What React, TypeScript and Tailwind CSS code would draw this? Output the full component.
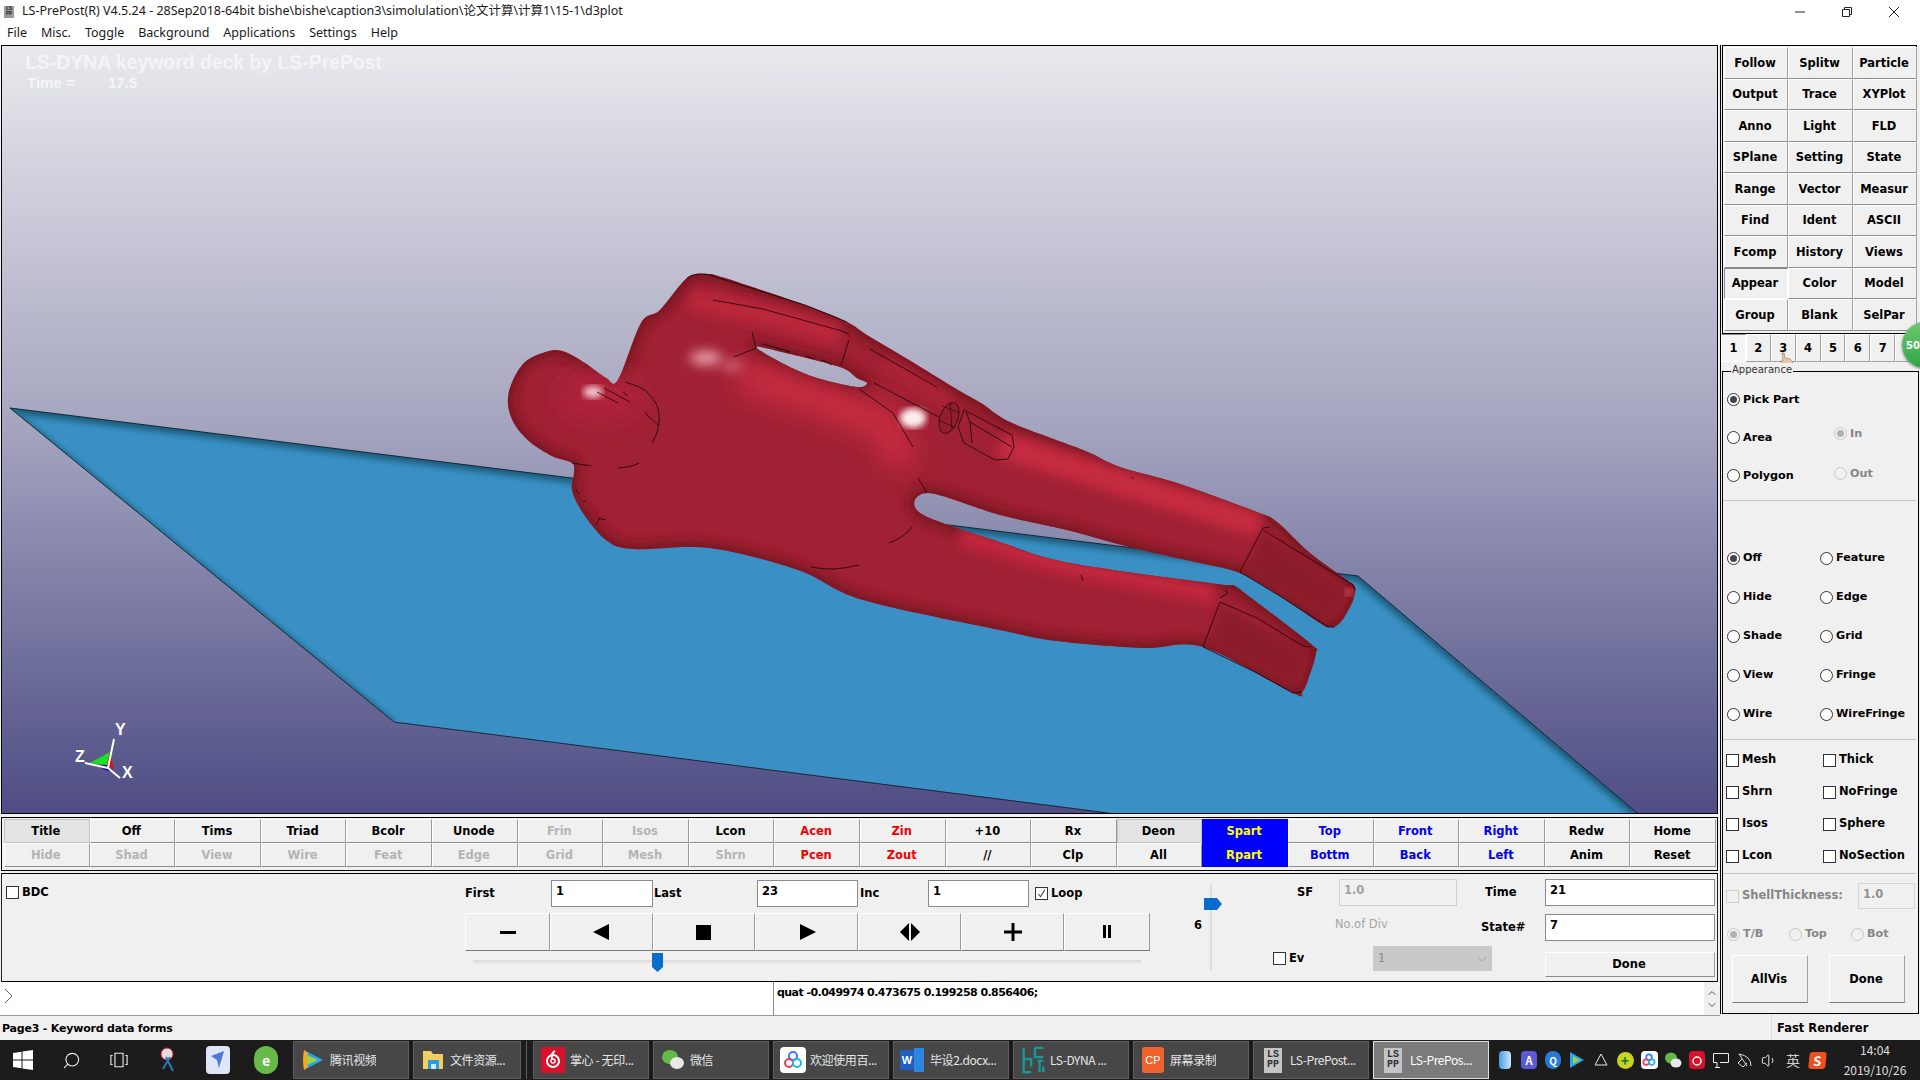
import { ChevronDown, ChevronUp, Search, Volume1 } from "lucide-react";

type Pt = [number, number];

const sideButtons = [
  ["Follow", "Splitw", "Particle"],
  ["Output", "Trace", "XYPlot"],
  ["Anno", "Light", "FLD"],
  ["SPlane", "Setting", "State"],
  ["Range", "Vector", "Measur"],
  ["Find", "Ident", "ASCII"],
  ["Fcomp", "History", "Views"],
  ["Appear", "Color", "Model"],
  ["Group", "Blank", "SelPar"],
];

const topRow = [
  ["Title", "k"], ["Off", "k"], ["Tims", "k"], ["Triad", "k"], ["Bcolr", "k"], ["Unode", "k"], ["Frin", "g"], ["Isos", "g"], ["Lcon", "k"], ["Acen", "r"],
  ["Zin", "r"], ["+10", "k"], ["Rx", "k"], ["Deon", "k"], ["Spart", "y"], ["Top", "b"], ["Front", "b"], ["Right", "b"], ["Redw", "k"], ["Home", "k"],
];
const bottomRow = [
  ["Hide", "g"], ["Shad", "g"], ["View", "g"], ["Wire", "g"], ["Feat", "g"], ["Edge", "g"], ["Grid", "g"], ["Mesh", "g"], ["Shrn", "g"], ["Pcen", "r"],
  ["Zout", "r"], ["//", "k"], ["Clp", "k"], ["All", "k"], ["Rpart", "y"], ["Bottm", "b"], ["Back", "b"], ["Left", "b"], ["Anim", "k"], ["Reset", "k"],
];

const toneClass: Record<string, string> = {
  k: "text-black",
  g: "text-[#b4b4b4]",
  r: "text-[#f00000]",
  b: "text-[#0000f0]",
  y: "text-[#ffff00]",
};

// closed smooth outline through the given points
function smooth(points: Pt[], k = 0.16) {
  const n = points.length;
  let d = `M${points[0][0]} ${points[0][1]}`;
  for (let i = 0; i < n; i++) {
    const p0 = points[(i - 1 + n) % n];
    const p1 = points[i];
    const p2 = points[(i + 1) % n];
    const p3 = points[(i + 2) % n];
    const c1x = p1[0] + (p2[0] - p0[0]) * k;
    const c1y = p1[1] + (p2[1] - p0[1]) * k;
    const c2x = p2[0] - (p3[0] - p1[0]) * k;
    const c2y = p2[1] - (p3[1] - p1[1]) * k;
    d += `C${c1x.toFixed(1)} ${c1y.toFixed(1)} ${c2x.toFixed(1)} ${c2y.toFixed(1)} ${p2[0]} ${p2[1]}`;
  }
  return d + "Z";
}

const bodyPts: Pt[] = [
  [618, 380], [641, 323], [660, 310], [687, 278], [706, 274], [725, 278], [805, 305], [847, 322], [867, 335], [909, 360], [958, 390], [981, 403], [1012, 423],
  [1083, 450], [1120, 467], [1177, 483], [1257, 512], [1277, 522], [1310, 553], [1347, 580], [1355, 587], [1354, 597], [1350, 607], [1340, 623], [1330, 627], [1320, 623],
  [1283, 598], [1240, 573], [1200, 563], [1133, 548], [1067, 530], [1000, 515], [928, 493], [920, 513], [1000, 542], [1070, 563], [1217, 584], [1233, 585],
  [1250, 597], [1311, 644], [1316, 653], [1308, 680], [1302, 692], [1293, 693], [1203, 647], [1143, 648], [1057, 641], [1000, 630], [863, 600], [798, 570],
  [710, 548], [633, 549], [606, 540], [583, 513], [572, 490], [574, 473], [572, 463], [552, 456], [530, 442], [515, 425], [508, 405], [511, 385], [525, 362], [549, 351], [565, 352], [585, 363], [606, 378],
];
const holePts: Pt[] = [[756, 347], [786, 353], [840, 367], [857, 378], [867, 383], [857, 387], [817, 378], [786, 365]];
const bodyPath = smooth(bodyPts) + smooth(holePts);

const figureLines = [
  "M713 300 L730 303 L763 309 L842 331",
  "M752 332 L756 348 M756 348 L734 357",
  "M849 340 L841 365 M842 331 L849 334",
  "M870 349 L937 387",
  "M763 344 L790 352 M806 356 L814 359 M822 360 L832 365",
  "M859 389 L893 413 L913 447",
  "M874 383 L939 417",
  "M625 382 Q645 388 648 393 Q660 405 659 417 Q660 430 652 443",
  "M597 392 L618 403 M604 388 L630 402 M645 413 L658 425 M623 392 L628 396",
  "M618 468 Q632 467 639 463 M572 463 L591 466",
  "M918 478 L927 493 M889 543 Q905 537 912 527 M811 567 Q832 572 859 565",
  "M576 490 L579 494 M583 502 L586 501 M598 518 L606 520 M596 525 L600 518",
  "M958 427 L964 410 L1012 435 L1014 447 L1008 459 L995 460 L964 443 L958 427",
  "M966 412 L970 422 L1012 447 M970 422 L972 443",
  "M1263 528 L1240 572 L1283 598 L1328 627 L1335 627",
  "M1263 530 L1307 557 L1353 585 L1355 590 M1263 528 L1270 527",
  "M1220 602 L1203 647 L1255 672 L1293 693 L1302 692",
  "M1220 602 L1257 618 L1303 646 L1311 647 M1220 598 L1228 593 L1225 590",
  "M687 278 Q695 273 706 274 L805 305 L847 322",
  "M1132 477 L1133 479 M1081 575 L1083 581",
];

function Viewport() {
  return (
    <div className="relative ml-px h-[769px] w-[1717px] border border-black bg-gradient-to-b from-[#e9e9ed] via-[#a4a4bf] to-[#4f4d84]">
      <svg viewBox="2 46 1715 767" className="block h-[767px] w-[1715px]">
        <defs>
          <filter id="blur2"><feGaussianBlur stdDeviation="2" /></filter>
          <filter id="blur3"><feGaussianBlur stdDeviation="3" /></filter>
          <filter id="blur6" x="-50%" y="-100%" width="200%" height="300%"><feGaussianBlur stdDeviation="6" /></filter>
          <filter id="blur12" x="-50%" y="-100%" width="200%" height="300%"><feGaussianBlur stdDeviation="12" /></filter>
          <clipPath id="plane"><polygon points="10,408 1358,576 1637,813 1112,813 394,722" /></clipPath>
          <clipPath id="body"><path d={bodyPath} clipRule="evenodd" /></clipPath>
        </defs>

        {/* plate */}
        <polygon points="10,408 1358,576 1637,813 1112,813 394,722" fill="#3a90c4" />
        <g clipPath="url(#plane)">
          <polyline points="10,408 1358,576 1637,813" fill="none" stroke="#1a5a78" strokeWidth="10" filter="url(#blur3)" />
          <polyline points="10,408 394,722" fill="none" stroke="#246f92" strokeWidth="5" filter="url(#blur2)" />
        </g>
        <polyline points="394,722 10,408 1358,576 1637,813" fill="none" stroke="#101c28" strokeWidth="0.9" />
        <line x1="394" y1="722" x2="1108" y2="813" stroke="#14222e" strokeWidth="0.9" />

        {/* dummy */}
        <path d={bodyPath} fill="#a02133" fillRule="evenodd" />
        <g clipPath="url(#body)">
          <path d={bodyPath} fill="none" stroke="#73141f" strokeWidth="11" filter="url(#blur6)" />
          <polyline points="1000,445 1120,482 1260,525" fill="none" stroke="#c6293f" strokeWidth="26" filter="url(#blur6)" />
          <polyline points="960,535 1060,565 1215,594" fill="none" stroke="#c3283e" strokeWidth="20" filter="url(#blur6)" />
          <polyline points="740,375 820,400 885,425 905,465" fill="none" stroke="#c62a41" strokeWidth="34" filter="url(#blur12)" />
          <polyline points="690,300 780,318 840,335" fill="none" stroke="#bb263b" strokeWidth="22" filter="url(#blur6)" />
          <polyline points="885,362 950,402" fill="none" stroke="#b02338" strokeWidth="12" filter="url(#blur6)" />
          <ellipse cx="600" cy="395" rx="40" ry="26" fill="#b1243a" filter="url(#blur12)" />
          <polygon points="1263,532 1244,572 1330,622 1348,592" fill="#8c1b2a" filter="url(#blur3)" />
          <polygon points="1222,606 1207,647 1296,688 1308,652" fill="#8c1b2a" filter="url(#blur3)" />
          <ellipse cx="706" cy="358" rx="16" ry="7" fill="#e8a0ae" filter="url(#blur6)" />
          <ellipse cx="732" cy="366" rx="12" ry="5" fill="#d66a7c" filter="url(#blur6)" />
          <ellipse cx="593" cy="392" rx="10" ry="6" fill="#f3c4ce" filter="url(#blur3)" />
          <ellipse cx="913" cy="418" rx="13" ry="10" fill="#fdeef0" filter="url(#blur3)" />
          <ellipse cx="1349" cy="592" rx="4" ry="4" fill="#d6475c" filter="url(#blur3)" />
        </g>
        <ellipse cx="949" cy="418" rx="9" ry="16" fill="#8a1a29" fillOpacity="0.6" stroke="#1d0a0d" strokeWidth="0.7" transform="rotate(20 949 418)" />
        <path d="M942 406 L960 413 M938 420 L956 428 M950 402 L952 430" stroke="#1d0a0d" strokeWidth="0.6" fill="none" />
        <path d={figureLines.join(" ")} fill="none" stroke="#170508" strokeWidth="0.8" />

        {/* triad */}
        <polygon points="90,763 110,752 107,765" fill="#16e31e" />
        <polygon points="110,752 114,770 107,765" fill="#e30d0d" />
        <polygon points="97,765 107,765 113,772 105,770" fill="#0b0bb0" />
        <path d="M108 768 L114 739 M108 768 L85 763 M108 768 L120 778" stroke="#fff" strokeWidth="2" fill="none" />
      </svg>
      <div className="absolute left-[23px] top-[4px] font-['Liberation_Sans'] text-[19.4px] font-bold leading-6 text-white/60">LS-DYNA keyword deck by LS-PrePost</div>
      <div className="absolute left-[25px] top-[29px] flex font-['Liberation_Sans'] text-[15px] font-bold leading-4 text-white/70">
        <span className="w-[81px]">Time =</span>
        <span>17.5</span>
      </div>
      <span className="absolute left-[113px] top-[676px] font-['Liberation_Sans'] text-[16px] font-bold leading-4 text-white">Y</span>
      <span className="absolute left-[73px] top-[703px] font-['Liberation_Sans'] text-[16px] font-bold leading-4 text-white">Z</span>
      <span className="absolute left-[120px] top-[719px] font-['Liberation_Sans'] text-[16px] font-bold leading-4 text-white">X</span>
    </div>
  );
}

function PanelButton({ label, className = "", pressed = false }: { label: React.ReactNode; className?: string; pressed?: boolean }) {
  return (
    <div
      className={`flex items-center justify-center border pt-px pr-[2px] text-[11.5px] font-bold ${
        pressed ? "border-t-[#8a8a8a] border-l-[#8a8a8a] border-r-white border-b-white" : "border-t-white border-l-white border-r-[#a0a0a0] border-b-[#8c8c8c]"
      } ${className}`}
    >
      {label}
    </div>
  );
}

function Radio({ label, checked = false, disabled = false }: { label: string; checked?: boolean; disabled?: boolean }) {
  return (
    <div className={`ml-px flex items-center gap-[3px] text-[11.2px] font-bold ${disabled ? "text-[#868686]" : "text-black"}`}>
      <span className={`flex h-[13px] w-[13px] items-center justify-center rounded-full border ${disabled ? "border-[#c8c8c8] bg-[#f0f0f0]" : "border-[#333] bg-white"}`}>
        {checked && <span className={`h-[7px] w-[7px] rounded-full ${disabled ? "bg-[#b0b0b0]" : "bg-[#444]"}`} />}
      </span>
      <span>{label}</span>
    </div>
  );
}

function Check({ label, checked = false, disabled = false }: { label: string; checked?: boolean; disabled?: boolean }) {
  return (
    <div className={`flex items-center gap-[3px] text-[11.5px] font-bold ${disabled ? "text-[#868686]" : "text-black"}`}>
      <span className={`flex h-[13px] w-[13px] items-center justify-center border ${disabled ? "border-[#d0d0d0] bg-[#f0f0f0]" : "border-[#333] bg-white"}`}>
        {checked && (
          <svg viewBox="0 0 12 12" className="h-[11px] w-[11px]">
            <path d="M2.5 6.5 L5 9.5 L9.5 2" fill="none" stroke="#333" strokeWidth="1.1" />
          </svg>
        )}
      </span>
      <span>{label}</span>
    </div>
  );
}

function Field({ value, className = "" }: { value: string; className?: string }) {
  return <div className={`h-[27px] border border-[#8a8a8a] bg-white pl-[4px] text-[11.5px] font-bold leading-[20px] ${className}`}>{value}</div>;
}

function ButtonBar() {
  return (
    <div className="mt-[3px] ml-px h-[54px] w-[1717px] border border-black pl-[2px] pt-px">
      {[topRow, bottomRow].map((row, r) => (
        <div key={r} className="grid h-[24px] grid-cols-[repeat(20,85.6px)]">
          {row.map(([label, tone]) => {
            const isBlue = tone === "y";
            const flat = label === "Title" || label === "Deon";
            return (
              <div
                key={label}
                className={`flex items-center justify-center pt-px pr-[2px] text-[11.5px] font-bold ${toneClass[tone]} ${
                  isBlue
                    ? "bg-[#0000ff]"
                    : flat
                      ? "border border-[#c4c4c4] bg-[#e3e3e3]"
                      : "border border-t-white border-l-white border-r-[#9a9a9a] border-b-[#8c8c8c]"
                }`}
              >
                {label}
              </div>
            );
          })}
        </div>
      ))}
    </div>
  );
}

function PlayControls() {
  const glyph = "fill-black";
  const buttons: [string, React.ReactNode][] = [
    ["w-[85px]", <svg key="m" viewBox="0 0 20 20" className="h-5 w-5"><rect x="2" y="9" width="16" height="3" className={glyph} /></svg>],
    ["w-[103px]", <svg key="l" viewBox="0 0 20 20" className="h-5 w-5"><polygon points="1,10 17,2 17,18" className={glyph} /></svg>],
    ["w-[102px]", <svg key="s" viewBox="0 0 20 20" className="h-5 w-5"><rect x="2" y="3" width="15" height="15" className={glyph} /></svg>],
    ["w-[103px]", <svg key="r" viewBox="0 0 20 20" className="h-5 w-5"><polygon points="3,2 19,10 3,18" className={glyph} /></svg>],
    ["w-[103px]", <svg key="b" viewBox="0 0 24 20" className="h-5 w-6"><polygon points="2,10 11,1 11,19" className={glyph} /><polygon points="13,1 22,10 13,19" className={glyph} /></svg>],
    ["w-[103px]", <svg key="p" viewBox="0 0 20 20" className="h-5 w-5"><path d="M1 10 H19 M10 1 V19" stroke="#000" strokeWidth="3" /></svg>],
    ["w-[86px]", <svg key="h" viewBox="0 0 20 20" className="h-5 w-5"><path d="M6 3 H9 V16 H6 Z M11 3 H14 V16 H11 Z" className={glyph} /></svg>],
  ];
  return (
    <div className="flex w-[685px] flex-col pt-[6px]">
      <div className="flex h-[27px] items-center text-[11.5px] font-bold">
        <span className="w-[86px]">First</span>
        <Field value="1" className="w-[102px]" />
        <span className="w-[104px] pl-px">Last</span>
        <Field value="23" className="w-[101px]" />
        <span className="w-[70px] pl-[2px]">Inc</span>
        <Field value="1" className="w-[101px]" />
        <div className="ml-[6px]"><Check label="Loop" checked /></div>
      </div>
      <div className="mt-[6px] flex h-[38px]">
        {buttons.map(([width, icon], i) => (
          <div key={i} className={`flex items-center justify-center border border-t-white border-l-white border-r-[#9a9a9a] border-b-[#777] ${width}`}>
            {icon}
          </div>
        ))}
      </div>
      <div className="relative mt-[2px] h-[20px]">
        <div className="absolute left-[8px] top-[7px] h-[3px] w-[668px] border border-[#dcdcdc] bg-[#e8e8e8]" />
        <svg viewBox="0 0 11 19" className="absolute left-[187px] top-0 h-[19px] w-[11px]">
          <polygon points="0,0 11,0 11,14 5.5,19 0,14" fill="#0a6ccc" />
        </svg>
      </div>
    </div>
  );
}

function ControlPanel() {
  return (
    <div className="mt-[2px] ml-px flex h-[109px] w-[1717px] border-y border-black border-x border-x-[#222]">
      <div className="w-[463px] pl-[4px] pt-[10px]"><Check label="BDC" /></div>
      <PlayControls />
      <div className="flex w-[123px] pt-[9px]">
        <span className="ml-[44px] mt-[34px] h-4 w-[12px] text-[11.5px] font-bold leading-4">6</span>
        <div className="relative ml-[4px] h-[87px] w-[2px] bg-[#dedede]">
          <svg viewBox="0 0 18 12" className="absolute left-[-6px] top-[15px] h-[12px] w-[18px]">
            <polygon points="0,0 13,0 18,6 13,12 0,12" fill="#0a6ccc" />
          </svg>
        </div>
      </div>
      <div className="grid w-[442px] grid-cols-[66px_118px_88px_170px] grid-rows-[27px_28px_31px] gap-y-[8px] pt-[5px] text-[11.5px] font-bold">
        <span className="self-center pl-[24px]">SF</span>
        <div className="h-[27px] border border-[#d0d0d0] pl-[4px] leading-[20px] text-[#a0a0a0]">1.0</div>
        <span className="self-center pl-[28px]">Time</span>
        <Field value="21" />
        <span />
        <span className="-ml-[4px] self-start pt-[2px] font-normal text-[#a5a5a5]">No.of Div</span>
        <span className="self-center pl-[24px]">State#</span>
        <Field value="7" />
        <div className="self-start"><Check label="Ev" /></div>
        <div className="col-span-2 -mt-[4px] ml-[34px] flex h-[25px] w-[119px] items-center justify-between bg-[#c9c9c9] px-[5px] font-normal text-[#8a8a8a]">
          1
          <svg viewBox="0 0 10 6" className="h-[6px] w-[10px]"><path d="M1 1 L5 5 L9 1" fill="none" stroke="#a8a8a8" /></svg>
        </div>
        <PanelButton label="Done" className="mt-[2px] h-[25px] font-bold" />
      </div>
    </div>
  );
}

function CommandLine() {
  return (
    <div className="flex h-[34px] w-[1720px] border-b border-[#9a9a9a] bg-white">
      <div className="w-[774px] border-r border-[#8a8a8a] pl-[4px] pt-[6px]">
        <svg viewBox="0 0 9 16" className="h-[16px] w-[9px]"><path d="M1 1 L8 8 L1 15" fill="none" stroke="#5a5ab8" /></svg>
      </div>
      <div className="flex-1 pl-[3px] pt-[3px] text-[11px] font-bold leading-4 tracking-[-0.55px]">quat -0.049974 0.473675 0.199258 0.856406;</div>
      <div className="flex w-[16px] flex-col items-center justify-center bg-[#f0f0f0]">
        <ChevronUp size={12} color="#555" strokeWidth={2} />
        <ChevronDown size={12} color="#555" strokeWidth={2} />
      </div>
    </div>
  );
}

function RightPanel() {
  return (
    <div className="flex w-[200px] flex-col">
      <div className="h-[969px] border-l border-black">
        <div className="ml-px h-[289px] w-[195px] border border-black bg-[#f0f0f0] pl-px pt-px">
          {sideButtons.map((row) => (
            <div key={row[0]} className="grid h-[31.5px] grid-cols-[64px_65px_64px]">
              {row.map((label) => <PanelButton key={label} label={label} pressed={label === "Appear"} />)}
            </div>
          ))}
        </div>
        <div className="relative flex h-[37px] items-start">
          {["1", "2", "3", "4", "5", "6", "7", ""].map((tab, i) => (
            <div
              key={i}
              className={`flex h-[28px] w-[25px] items-center justify-center border pt-px text-[11.5px] font-bold ${
                i === 0 ? "border-t-[#8a8a8a] border-l-white border-r-white border-b-white bg-[#f4f4f4]" : "border-t-white border-l-white border-r-[#a0a0a0] border-b-[#a0a0a0]"
              }`}
            >
              {tab}
            </div>
          ))}
          <div className="absolute left-[181px] top-[-12px] flex h-[46px] w-[46px] items-center rounded-full bg-gradient-to-b from-[#6cc86e] to-[#2ea54a] pl-[4px] text-[10px] font-bold text-white shadow-[0_1px_3px_#777]">50</div>
          <svg viewBox="0 0 16 18" className="absolute left-[58px] top-[18px] h-[18px] w-[16px]">
            <path d="M3 1 L5 1 L6 6 L11 7 L14 10 L12 16 L6 16 L1 9 L4 9 Z" fill="#e3c9a8" stroke="#9e8468" strokeWidth="0.7" />
          </svg>
        </div>
        <AppearanceBox />
      </div>
      <div className="flex h-[26px] items-center">
        <div className="ml-[51px] flex h-full items-center border-l border-[#dcdcdc] pl-[5px] pt-[3px] text-[11.5px] font-bold">Fast Renderer</div>
      </div>
    </div>
  );
}

function AppearanceBox() {
  return (
    <div className="relative ml-px h-[643px] w-[197px] border border-black pl-[3px]">
      <span className="absolute left-[8px] top-[-9px] bg-[#f0f0f0] px-px text-[10px] leading-[14px] text-[#333]">Appearance</span>
      <div className="flex h-[128px] pt-[9px]">
        <div className="w-[107px]">
          {[["Pick Part", true], ["Area", false], ["Polygon", false]].map(([label, on]) => (
            <div key={String(label)} className="flex h-[38px] items-center"><Radio label={String(label)} checked={Boolean(on)} /></div>
          ))}
        </div>
        <div className="pt-[33px]">
          <div className="flex h-[40px] items-center"><Radio label="In" checked disabled /></div>
          <div className="flex h-[40px] items-center"><Radio label="Out" disabled /></div>
        </div>
      </div>
      <div className="-ml-[3px] mr-[2px] border-t border-[#c4c4c4]" />
      <div className="grid grid-cols-[93px_1fr] grid-rows-[repeat(5,39px)] pt-[38px]">
        {[["Off", "Feature"], ["Hide", "Edge"], ["Shade", "Grid"], ["View", "Fringe"], ["Wire", "WireFringe"]].flatMap(([a, b]) => [
          <div key={a} className="flex items-center"><Radio label={a} checked={a === "Off"} /></div>,
          <div key={b} className="flex items-center"><Radio label={b} /></div>,
        ])}
      </div>
      <div className="-ml-[3px] mr-[2px] mt-[5px] border-t border-[#c4c4c4]" />
      <div className="grid grid-cols-[97px_1fr] grid-rows-[repeat(4,32px)] pt-[4px]">
        {[["Mesh", "Thick"], ["Shrn", "NoFringe"], ["Isos", "Sphere"], ["Lcon", "NoSection"]].flatMap(([a, b]) => [
          <div key={a} className="flex items-center"><Check label={a} /></div>,
          <div key={b} className="flex items-center"><Check label={b} /></div>,
        ])}
      </div>
      <div className="-ml-[3px] mr-[2px] mt-px border-t border-[#c4c4c4]" />
      <div className="flex items-center justify-between pr-[3px] pt-[9px]">
        <Check label="ShellThickness:" disabled />
        <div className="h-[26px] w-[57px] border border-[#d4d4d4] pl-[4px] text-[11.5px] font-bold leading-[20px] text-[#909090]">1.0</div>
      </div>
      <div className="flex pt-[17px]">
        <div className="w-[62px]"><Radio label="T/B" checked disabled /></div>
        <div className="w-[62px]"><Radio label="Top" disabled /></div>
        <Radio label="Bot" disabled />
      </div>
      <div className="flex pl-[6px] pt-[12px]">
        <PanelButton label="AllVis" className="h-[48px] w-[76px] border-r-[#777] border-b-[#777]" />
        <PanelButton label="Done" className="ml-[21px] h-[48px] w-[76px] border-r-[#777] border-b-[#777]" />
      </div>
    </div>
  );
}

function WinLogo() {
  return (
    <svg viewBox="0 0 20 20" className="h-[20px] w-[20px]">
      <path d="M0 3 L8.5 1.8 V9.5 H0 Z M9.5 1.6 L20 0 V9.5 H9.5 Z M0 10.5 H8.5 V18.2 L0 17 Z M9.5 10.5 H20 V20 L9.5 18.4 Z" fill="#fff" />
    </svg>
  );
}

function LsppIcon() {
  return (
    <span className="flex h-[25px] w-[18px] flex-col items-center justify-center bg-[#c4c4c4] font-['Liberation_Mono'] text-[10px] font-bold leading-[10px] text-[#333]">
      <span>LS</span>
      <span>PP</span>
    </span>
  );
}

const taskItems: { label: string; icon: React.ReactNode; active?: boolean; narrow?: boolean }[] = [
  { label: "腾讯视频", icon: <svg viewBox="0 0 24 24" className="h-6 w-6"><path d="M3 2 L22 12 L3 22 Z" fill="#29a4ee" /><path d="M6 7 L17 12 L6 17 Z" fill="#9bd640" /><path d="M3 2 Q1 12 3 22 L7 19 Q5 12 7 5 Z" fill="#f6a623" /></svg> },
  { label: "文件资源...", narrow: true, icon: <svg viewBox="0 0 24 24" className="h-6 w-6"><path d="M2 3 H10 L12 6 H22 V21 H2 Z" fill="#f4cf5d" /><rect x="7" y="12" width="11" height="9" fill="#2a9ae6" /><rect x="10" y="16" width="5" height="5" fill="#cdeaff" /></svg> },
  { label: "掌心 - 无印...", icon: <span className="flex h-[26px] w-[24px] items-center justify-center bg-[#d8102a]"><svg viewBox="0 0 20 20" className="h-5 w-5"><circle cx="10" cy="11" r="6" fill="none" stroke="#fff" strokeWidth="2" /><circle cx="10" cy="11" r="2" fill="none" stroke="#fff" strokeWidth="1.5" /><path d="M12 1 Q8 3 9 9" fill="none" stroke="#fff" strokeWidth="2" /></svg></span> },
  { label: "微信", icon: <svg viewBox="0 0 24 24" className="h-6 w-6"><ellipse cx="9" cy="9" rx="8" ry="7" fill="#62bb46" /><ellipse cx="16" cy="15" rx="7" ry="6" fill="#e8e8e8" /></svg> },
  { label: "欢迎使用百...", icon: <span className="flex h-[26px] w-[26px] items-center justify-center rounded bg-white"><svg viewBox="0 0 20 20" className="h-5 w-5" fill="none" strokeWidth="2"><circle cx="10" cy="6" r="4" stroke="#2e7cf6" /><circle cx="6" cy="13" r="4" stroke="#ef3b5a" /><circle cx="14" cy="13" r="4" stroke="#21b8e8" /></svg></span> },
  { label: "毕设2.docx...", icon: <span className="flex h-[26px] w-[26px] items-center"><span className="flex h-[20px] w-[14px] items-center justify-center bg-[#1e5fbf] font-['Liberation_Sans'] text-[11px] font-bold text-white">W</span><span className="h-[24px] w-[10px] bg-[#2f86e0]" /></span> },
  { label: "LS-DYNA ...", icon: <svg viewBox="0 0 24 30" className="h-[28px] w-[24px]" fill="none" stroke="#1a9a96" strokeWidth="2.5"><path d="M2 2 V28 H10 M2 14 H10 V22 M14 2 H23 M14 2 V12 H23 M17 16 H23 M19 16 V28 M23 22 V28" /></svg> },
  { label: "屏幕录制", icon: <span className="flex h-[26px] w-[22px] items-center justify-center rounded-[3px] bg-[#f0622d] font-['Liberation_Sans'] text-[11px] text-white">CP</span> },
  { label: "LS-PrePost...", icon: <LsppIcon /> },
  { label: "LS-PrePos...", icon: <LsppIcon />, active: true },
];

const trayIcons: React.ReactNode[] = [
  <span key="a" className="h-[18px] w-[12px] rounded-sm bg-gradient-to-r from-[#3d9de8] to-[#cfe6fa]" />,
  <span key="b" className="flex h-[18px] w-[16px] items-center justify-center rounded bg-[#5a5ad6] text-[11px] font-bold text-white">A</span>,
  <span key="c" className="flex h-[18px] w-[16px] items-center justify-center rounded-full bg-[#2a7ad2] text-[10px] font-bold text-white">Q</span>,
  <svg key="d" viewBox="0 0 16 18" className="h-[18px] w-[16px]"><path d="M1 1 L15 9 L1 17 Z" fill="#29a4ee" /><path d="M4 5 L11 9 L4 13 Z" fill="#9bd640" /></svg>,
  <svg key="e" viewBox="0 0 16 16" className="h-[16px] w-[16px]" fill="none" stroke="#e8e8e8"><path d="M8 2 L14 13 H2 Z" /></svg>,
  <span key="f" className="flex h-[17px] w-[17px] items-center justify-center rounded-full bg-[#c8d420] text-[14px] font-bold leading-none text-[#173]">+</span>,
  <span key="g" className="flex h-[18px] w-[17px] items-center justify-center rounded-sm bg-white"><svg viewBox="0 0 20 20" className="h-[14px] w-[14px]" fill="none" strokeWidth="2.5"><circle cx="10" cy="6" r="4" stroke="#2e7cf6" /><circle cx="6" cy="13" r="4" stroke="#ef3b5a" /><circle cx="14" cy="13" r="4" stroke="#21b8e8" /></svg></span>,
  <svg key="h" viewBox="0 0 18 18" className="h-[18px] w-[18px]"><ellipse cx="7" cy="7" rx="6" ry="5.5" fill="#62bb46" /><ellipse cx="12" cy="12" rx="5.5" ry="4.5" fill="#e8e8e8" /></svg>,
  <span key="i" className="flex h-[18px] w-[16px] items-center justify-center rounded-sm bg-[#d8102a]"><svg viewBox="0 0 12 12" className="h-3 w-3" fill="none" stroke="#fff" strokeWidth="1.5"><circle cx="6" cy="7" r="4" /></svg></span>,
  <svg key="j" viewBox="0 0 18 18" className="h-[18px] w-[18px]" fill="none" stroke="#eee"><path d="M1.5 2.5 H16.5 V11.5 H8 M1.5 2.5 V11.5 H5 V16.5 M3 16.5 H8" /></svg>,
  <svg key="k" viewBox="0 0 18 18" className="h-[18px] w-[18px]" fill="none" stroke="#ddd"><path d="M3 3 Q15 5 15 15 M3 3 L11 15 M6 8 L2 12 L7 16 L11 12" /></svg>,
  <Volume1 key="l" size={17} color="#e8e8e8" strokeWidth={1.4} />,
  <span key="m" className="text-[14px] text-[#cfcfcf]">英</span>,
  <span key="n" className="flex h-[17px] w-[17px] -skew-x-6 items-center justify-center rounded-[3px] bg-[#ee4f1e] text-[13px] font-bold text-white">S</span>,
];

function Taskbar() {
  return (
    <div className="flex h-[40px] items-center bg-[#1d1c1c] font-['Noto_Sans_CJK_SC','Noto_Sans',sans-serif] text-[12px] text-[#e6e6e6]">
      <div className="flex w-[293px] shrink-0 items-center">
        <span className="ml-[13px] w-[49px]"><WinLogo /></span>
        <span className="w-[48px]"><Search size={19} color="#f0f0f0" strokeWidth={1.4} className="-scale-x-100" /></span>
        <svg viewBox="0 0 20 20" className="mr-[30px] h-[18px] w-[18px]" fill="none" stroke="#eee" strokeWidth="1.2"><path d="M5.5 2.5 H14.5 V17.5 H5.5 Z M3 5 H1 V15 H3 M17 5 H19 V15 H17" /></svg>
        <svg viewBox="0 0 20 26" className="mr-[28px] h-[26px] w-[20px]" fill="none"><circle cx="9" cy="7" r="6" fill="#e8dada" stroke="#c8233a" /><path d="M8 10 L15 24 M12 10 L5 22" stroke="#2a7ab8" strokeWidth="2" /></svg>
        <span className="mr-[24px] flex h-[28px] w-[24px] items-center justify-center rounded-sm bg-[#dfe7f7]">
          <svg viewBox="0 0 16 20" className="h-5 w-4"><path d="M14 1 L9 18 L7 10 L1 6 Z" fill="#4a7ae0" /></svg>
        </span>
        <span className="flex h-[28px] w-[24px] items-center justify-center rounded-full bg-[#69b84a] text-[14px] font-bold text-white">e</span>
      </div>
      {taskItems.map((item) => (
        <div key={item.label} className="flex shrink-0">
          <div
            className={`flex h-[38px] items-center gap-[4px] border pl-[6px] ${item.narrow ? "w-[108px]" : "w-[116px]"} ${
              item.active ? "border-[#e0e0e0] bg-[#7b7b7b] text-white" : "border-[#5e5e5e] bg-[#474747]"
            }`}
          >
            <span className="flex w-[26px] shrink-0 justify-center">{item.icon}</span>
            <span className="truncate tracking-[-0.4px]">{item.label}</span>
          </div>
          {item.narrow ? <span className="ml-[5px] mr-[6px] w-[1px] bg-[#5e5e5e]" /> : <span className="w-[4px]" />}
        </div>
      ))}
      <div className="flex shrink-0 items-center">
        {trayIcons.map((icon, i) => <span key={i} className="flex w-[24px] justify-center">{icon}</span>)}
      </div>
      <div className="flex w-[92px] shrink-0 flex-col items-center leading-[20px] text-[#dedede]">
        <span>14:04</span>
        <span>2019/10/26</span>
      </div>
    </div>
  );
}

export default function App() {
  return (
    <div className="flex h-[1080px] w-[1920px] flex-col overflow-hidden bg-[#f0f0f0] font-['DejaVu_Sans',sans-serif] text-black">
      <div className="flex h-[23px] items-center bg-white font-['Noto_Sans','Noto_Sans_CJK_SC',sans-serif] text-[12.5px]">
        <span className="ml-[4px] mr-[8px] flex h-[12px] w-[10px] flex-col items-center justify-center bg-[#9a9a9a] font-['Liberation_Mono'] text-[5px] font-bold leading-[5px] text-[#222]">
          <span>LS</span>
          <span>PP</span>
        </span>
        <span className="text-[#1a1a1a]">LS-PrePost(R) V4.5.24 - 28Sep2018-64bit bishe\bishe\caption3\simolulation\论文计算\计算1\15-1\d3plot</span>
        <div className="ml-auto flex items-center text-[#222]">
          <svg viewBox="0 0 12 12" className="mr-[35px] h-[12px] w-[12px]"><path d="M1 6 H11" stroke="#222" /></svg>
          <svg viewBox="0 0 12 12" className="mr-[35px] h-[12px] w-[12px]" fill="none" stroke="#222"><path d="M1.5 3.5 H8.5 V10.5 H1.5 Z M3.5 3.5 V1.5 H10.5 V8.5 H8.5" /></svg>
          <svg viewBox="0 0 12 12" className="mr-[20px] h-[12px] w-[12px]"><path d="M1 1 L11 11 M11 1 L1 11" stroke="#222" /></svg>
        </div>
      </div>
      <div className="flex h-[22px] items-center gap-[14px] bg-white pb-[2px] pl-[7px] font-['Noto_Sans',sans-serif] text-[12.5px] text-[#1a1a1a]">
        {["File", "Misc.", "Toggle", "Background", "Applications", "Settings", "Help"].map((m) => <span key={m}>{m}</span>)}
      </div>
      <div className="flex h-[995px]">
        <div className="flex w-[1720px] flex-col">
          <Viewport />
          <ButtonBar />
          <ControlPanel />
          <CommandLine />
          <div className="flex h-[24px] items-center pl-[2px] pt-[3px] text-[11px] font-bold tracking-[-0.2px]">Page3 - Keyword data forms</div>
        </div>
        <RightPanel />
      </div>
      <Taskbar />
    </div>
  );
}
